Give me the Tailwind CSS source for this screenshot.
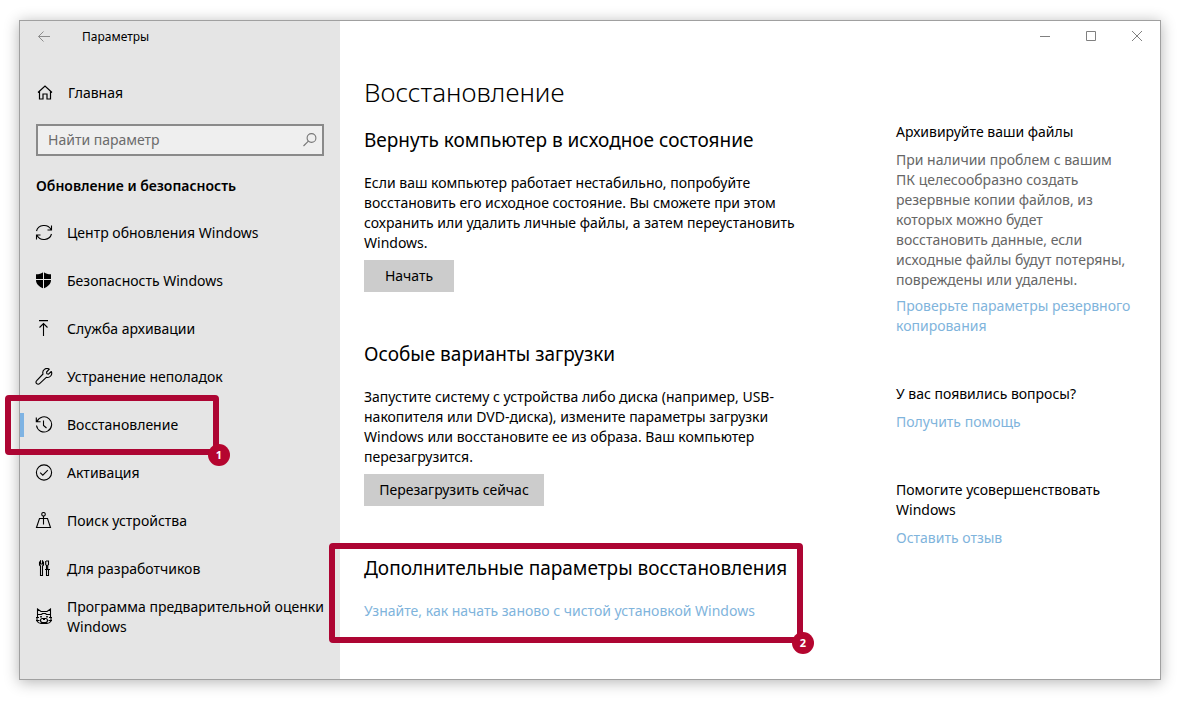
<!DOCTYPE html>
<html lang="ru">
<head>
  <meta charset="UTF-8">
  <meta name="viewport" content="width=device-width, initial-scale=1.0">
  <title>Параметры</title>
  <script src="https://cdn.jsdelivr.net/npm/@tailwindcss/browser@4"></script>
</head>
<body class="min-h-screen flex bg-white p-5 pl-[19px] pb-[21px] font-['Noto_Sans',sans-serif] text-sm leading-5 text-black">
  <div class="flex-1 flex border border-[#a0a0a0] bg-white shadow-[0_2px_14px_rgba(0,0,0,0.3)]">

    <!-- Sidebar -->
    <aside class="w-80 shrink-0 bg-[#e5e5e5]">
      <div class="h-8 flex items-center pl-4">
        <button type="button" aria-label="Назад" class="w-[46px] text-[#8c8c8c]">
          <svg class="w-4 h-4" viewBox="0 0 16 16" fill="none" stroke="currentColor"><path d="M14 7.5H2.5M7.5 2.5l-5 5 5 5"/></svg>
        </button>
        <span class="text-xs">Параметры</span>
      </div>

      <a href="#" class="mt-4 h-12 flex items-center gap-[14px] pl-4">
        <svg class="w-[18px] h-[18px]" viewBox="0 0 18 18" fill="none" stroke="currentColor" stroke-width="1.2"><path d="M2 8.500L9 2l7 6.500M3.500 7.500v7.500H7v-5h4v5h3.500V7.500"/></svg>
        <span>Главная</span>
      </a>

      <div class="relative mx-4 mt-[7px]">
        <input type="text" aria-label="Найти параметр" placeholder="Найти параметр" class="block w-full h-8 border-2 border-[#8a8a8a] bg-[#efefef] pl-2.5 pr-8 pb-0.5 placeholder:text-[#6b6b6b]">
        <svg class="absolute right-1.5 top-2 w-4 h-4 text-[#777]" viewBox="0 0 16 16" fill="none" stroke="currentColor" stroke-width="1.1"><circle cx="9.5" cy="6" r="4.4"/><path d="M6.4 9.2L1.5 14"/></svg>
      </div>

      <h2 class="mt-5 mb-[13px] pl-4 font-semibold">Обновление и безопасность</h2>

      <nav>
        <a href="#" class="h-12 flex items-center gap-[14px] pl-[15px]">
          <svg class="w-[18px] h-[18px] shrink-0" viewBox="0 0 18 18" fill="none" stroke="currentColor" stroke-width="1.1"><path d="M1.500 7A7.800 7.300 0 0 1 16 5.500M16.500 10A7.800 7.300 0 0 1 2 11.500M16.500 1.500v4.500h-4M1.500 15.500V11h4"/></svg>
          <span>Центр обновления Windows</span>
        </a>
        <a href="#" class="h-12 flex items-center gap-[14px] pl-[15px]">
          <svg class="w-[18px] h-[18px] shrink-0" viewBox="0 0 18 18"><path fill="currentColor" d="M8.500 0c2 1.500 4.500 2.300 7.500 2.300v5.700c0 4-3 6.500-7.500 8.500C4 14.500 1 12 1 8V2.300C4 2.300 6.500 1.500 8.500 0z"/><path d="M8.500 0v17M0 7.500h17" stroke="#e5e5e5"/></svg>
          <span>Безопасность Windows</span>
        </a>
        <a href="#" class="h-12 flex items-center gap-[14px] pl-[15px]">
          <svg class="w-[18px] h-[18px] shrink-0" viewBox="0 0 18 18" fill="none" stroke="currentColor" stroke-width="1.1"><path d="M4 .6h9M8.500 16V3.500M4.500 7.500l4-4 4 4"/></svg>
          <span>Служба архивации</span>
        </a>
        <a href="#" class="h-12 flex items-center gap-[14px] pl-[15px]">
          <svg class="w-[18px] h-[18px] shrink-0" viewBox="0 0 18 18" fill="none" stroke="currentColor" stroke-width="1.1" stroke-linejoin="round"><path d="M14.300 1.200a4.200 4.200 0 0 0-6.300 4.800L1.700 12.700a2 2 0 0 0 2.900 2.900l6.700-6.300a4.200 4.200 0 0 0 5-5.800l-2.800 2.600-1.700-.3-.2-1.800z"/></svg>
          <span>Устранение неполадок</span>
        </a>
        <a href="#" aria-current="page" class="relative h-12 flex items-center gap-[14px] pl-[15px]">
          <span class="absolute left-0 top-3 w-1 h-6 bg-[#7eb3e3]"></span>
          <svg class="w-[18px] h-[18px] shrink-0" viewBox="0 0 18 18" fill="none" stroke="currentColor" stroke-width="1.1"><path d="M2 5.500A7.600 7.600 0 1 1 1.500 9.500M1.300 1.500v4.300h4.300M8.500 4.500v5l3 2.500"/></svg>
          <span>Восстановление</span>
          <!-- Callout 1 -->
          <span class="absolute z-10 -left-[15px] -inset-y-1.5 w-[214px] border-6 border-[#ad0533] rounded-sm">
            <span class="absolute -right-[17px] -bottom-[17px] size-[22px] flex items-center justify-center rounded-full bg-[#b5052f] text-[11px] leading-4 font-bold text-white">1</span>
          </span>
        </a>
        <a href="#" class="h-12 flex items-center gap-[14px] pl-[15px]">
          <svg class="w-[18px] h-[18px] shrink-0" viewBox="0 0 18 18" fill="none" stroke="currentColor" stroke-width="1.1"><circle cx="9" cy="8.5" r="7.6"/><path d="M5.200 8.700l2.600 2.500 5-5"/></svg>
          <span>Активация</span>
        </a>
        <a href="#" class="h-12 flex items-center gap-[14px] pl-[15px]">
          <svg class="w-[18px] h-[18px] shrink-0" viewBox="0 0 18 18" fill="none" stroke="currentColor" stroke-width="1.1"><circle cx="8.5" cy="2.3" r="1.8"/><path d="M8.500 4.100v8.400M4.500 6.500h8L15.500 15.500h-14z"/></svg>
          <span>Поиск устройства</span>
        </a>
        <a href="#" class="h-12 flex items-center gap-[14px] pl-[15px]">
          <svg class="w-[18px] h-[18px] shrink-0" viewBox="0 0 18 18" fill="none" stroke="currentColor" stroke-width="1.1"><path d="M5.500 1v3h2V1l1 1.500V5l-1 1v9.500h-2V6l-1-1V2.500zM11 1h2.500v3.500l-.8 1v4M11.500 9.500v-4l-.8-1V1M10 9.500h5M11.500 9.500v6h2v-6"/></svg>
          <span>Для разработчиков</span>
        </a>
        <a href="#" class="h-12 flex items-center gap-[14px] pl-[15px]">
          <svg class="w-[18px] h-[18px] shrink-0" viewBox="0 0 18 18" fill="none" stroke="currentColor" stroke-width="1.1"><path d="M2.500 9.500V1L6 3.500h6L15.500 1v8.500M2.500 6.500h4l1-1h3l1 1h4M1 9.500h3M14 9.500h3M1 12.500h3.500M13.500 12.500H17M2 10v3c.8 1.500 2 2.500 4 2.500h6c2 0 3.200-1 4-2.500v-3"/><path d="M6 8v1.500M12 8v1.500" stroke-width="1.6"/><rect x="5.5" y="10.5" width="7" height="4" rx="2"/><path d="M8 11.500h2"/></svg>
          <span class="whitespace-nowrap">Программа предварительной оценки<br>Windows</span>
        </a>
      </nav>
    </aside>

    <!-- Content -->
    <div class="flex-1 min-w-0">
      <div class="h-8 flex justify-end text-[#808080]">
        <button type="button" aria-label="Свернуть" class="w-[46px] flex items-center justify-center">
          <svg class="w-3 h-3" viewBox="0 0 12 12" fill="none" stroke="currentColor"><path d="M1 5.500h10"/></svg>
        </button>
        <button type="button" aria-label="Развернуть" class="w-[46px] flex items-center justify-center">
          <svg class="w-3 h-3" viewBox="0 0 12 12" fill="none" stroke="currentColor"><path d="M1.500.5h9v9h-9z"/></svg>
        </button>
        <button type="button" aria-label="Закрыть" class="w-[46px] flex items-center justify-center">
          <svg class="w-3 h-3" viewBox="0 0 12 12" fill="none" stroke="currentColor"><path d="M1 0l10 10M11 0L1 10"/></svg>
        </button>
      </div>

      <div class="flex justify-between pl-6 pr-4">
        <main class="w-[440px] pt-[19px]">
          <h1 class="text-[26px] leading-10 font-light">Восстановление</h1>

          <section class="mt-[14px]">
            <h2 class="text-[19px] leading-7">Вернуть компьютер в исходное состояние</h2>
            <p class="mt-[19px]">Если ваш компьютер работает нестабильно, попробуйте восстановить его исходное состояние. Вы сможете при этом сохранить или удалить личные файлы, а затем переустановить Windows.</p>
            <button type="button" class="mt-[7px] h-8 w-[90px] bg-[#cccccc]">Начать</button>
          </section>

          <section class="mt-12">
            <h2 class="text-[19px] leading-7">Особые варианты загрузки</h2>
            <p class="mt-[19px]">Запустите систему с устройства либо диска (например, USB-накопителя или DVD-диска), измените параметры загрузки Windows или восстановите ее из образа. Ваш компьютер перезагрузится.</p>
            <button type="button" class="mt-[7px] h-8 w-[180px] bg-[#cccccc]">Перезагрузить сейчас</button>
          </section>

          <section class="relative mt-12">
            <h2 class="text-[19px] leading-7">Дополнительные параметры восстановления</h2>
            <a href="#" class="mt-[19px] block text-[#7fb4dc]">Узнайте, как начать заново с чистой установкой Windows</a>
            <!-- Callout 2 -->
            <div class="pointer-events-none absolute -left-[35px] -top-[11px] -bottom-[22px] w-[474px] border-6 border-[#ad0533] rounded-sm">
              <span class="absolute -right-[17px] -bottom-[17px] size-[22px] flex items-center justify-center rounded-full bg-[#b5052f] text-[11px] leading-4 font-bold text-white">2</span>
            </div>
          </section>
        </main>

        <aside class="w-[248px] pt-[69px] pr-3">
          <h3>Архивируйте ваши файлы</h3>
          <p class="mt-2 text-[#666666]">При наличии проблем с вашим ПК целесообразно создать резервные копии файлов, из которых можно будет восстановить данные, если исходные файлы будут потеряны, повреждены или удалены.</p>
          <a href="#" class="mt-1.5 block text-[#7fb4dc]">Проверьте параметры резервного копирования</a>
          <h3 class="mt-12">У вас появились вопросы?</h3>
          <a href="#" class="mt-2 block text-[#7fb4dc]">Получить помощь</a>
          <h3 class="mt-12">Помогите усовершенствовать Windows</h3>
          <a href="#" class="mt-2 block text-[#7fb4dc]">Оставить отзыв</a>
        </aside>
      </div>
    </div>
  </div>
</body>
</html>
